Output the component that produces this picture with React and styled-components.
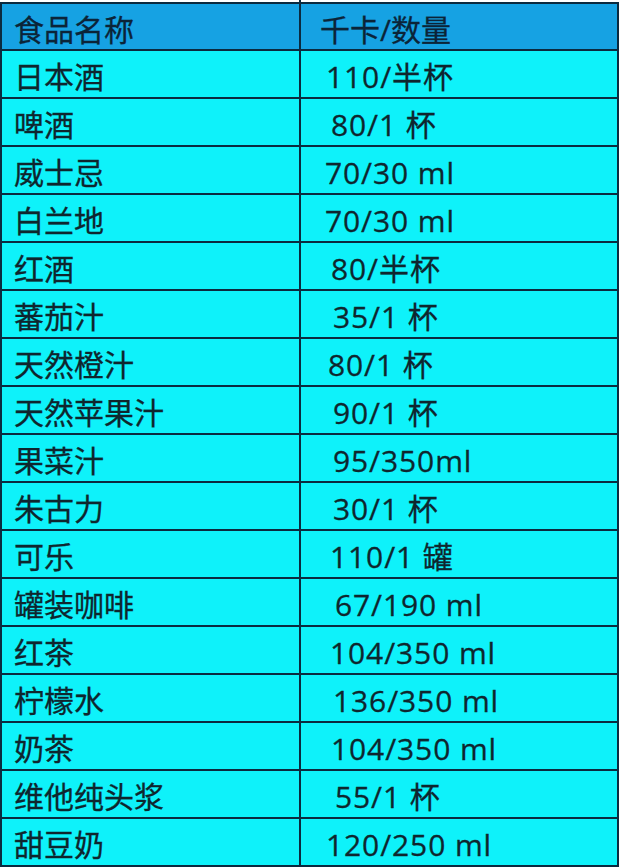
import React from "react";
import styled, { createGlobalStyle } from "styled-components";

const GlobalStyle = createGlobalStyle`
  html, body {
    margin: 0;
    padding: 0;
    background: #ffffff;
  }
  body {
    font-family: "Open Sans", "Noto Sans CJK SC", sans-serif;
  }
`;

const Page = styled.div`
  width: 619px;
  padding-top: 2px;
`;

const Table = styled.div`
  display: grid;
  grid-template-columns: 297px 316px;
  grid-auto-rows: 46px;
  grid-template-rows: 45px;
  gap: 2px;
  padding: 2px;
  background: #0b2a3f;
`;

const Cell = styled.div`
  position: relative;
  display: flex;
  align-items: center;
  box-sizing: border-box;
  padding-top: 6px;
  padding-left: ${(p) => (p.$second ? 19 + (p.$indent || 0) : 12)}px;
  background: ${(p) => (p.$head ? "#16a2e3" : "#0ef2fa")};
  color: ${(p) => (p.$head ? "#0b2438" : "#0e262e")};
  font-size: 30px;
  font-weight: 400;
  line-height: 1;
  white-space: pre;
  -webkit-text-stroke: 0.3px currentColor;
`;

const Latin = styled.span`
  letter-spacing: 0.9px;
`;

const HeadDivider = styled.span`
  position: absolute;
  left: -2px;
  top: -6px;
  width: 2px;
  height: 6px;
  background: #0b2a3f;
`;

const rows = [
  ["日本酒", "110/半杯", 6],
  ["啤酒", "80/1 杯", 11],
  ["威士忌", "70/30 ml", 5],
  ["白兰地", "70/30 ml", 5],
  ["红酒", "80/半杯", 11],
  ["蕃茄汁", "35/1 杯", 13],
  ["天然橙汁", "80/1 杯", 8],
  ["天然苹果汁", "90/1 杯", 13],
  ["果菜汁", "95/350ml", 13],
  ["朱古力", "30/1 杯", 13],
  ["可乐", "110/1 罐", 10],
  ["罐装咖啡", "67/190 ml", 15],
  ["红茶", "104/350 ml", 10],
  ["柠檬水", "136/350 ml", 13],
  ["奶茶", "104/350 ml", 11],
  ["维他纯头浆", "55/1 杯", 15],
  ["甜豆奶", "120/250 ml", 6],
];

export default function App() {
  return (
    <>
      <GlobalStyle />
      <Page>
        <Table>
          <Cell $head>食品名称</Cell>
          <Cell $head $second>
            <HeadDivider />
            千卡/数量
          </Cell>
          {rows.map(([name, value, indent]) => (
            <React.Fragment key={name}>
              <Cell>{name}</Cell>
              <Cell $second $indent={indent}>
                <Latin>{value}</Latin>
              </Cell>
            </React.Fragment>
          ))}
        </Table>
      </Page>
    </>
  );
}
